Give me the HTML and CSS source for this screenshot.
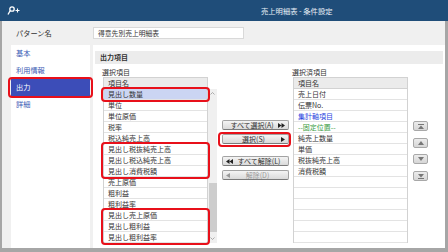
FILE: index.html
```html
<!DOCTYPE html>
<html lang="ja">
<head>
    <meta charset="UTF-8">
    <title>売上明細表 - 条件設定</title>
    <link rel="stylesheet" href="styles.css">
</head>
<body>
    <div class="window">
        <header class="titlebar">
            <svg class="app-icon" width="13" height="9" viewBox="0 0 13 9">
                <circle cx="5" cy="3" r="2.2" fill="none" stroke="#fff" stroke-width="1.3"/>
                <line x1="3.2" y1="4.6" x2="1" y2="8.5" stroke="#fff" stroke-width="1.3"/>
                <path d="M8.5 4.5h4M10.5 2.5v4" stroke="#fff" stroke-width="1.1"/>
            </svg>
            <span class="title">売上明細表 - 条件設定</span>
        </header>

        <div class="content">
            <div class="pattern-row">
                <span class="pattern-label">パターン名</span>
                <div class="text-input">得意先別売上明細表</div>
            </div>

            <div class="panes">
                <nav class="nav">
                    <div class="nav-item">基本</div>
                    <div class="nav-item">利用情報</div>
                    <div class="nav-item active mark">出力</div>
                    <div class="nav-item">詳細</div>
                </nav>

                <section class="main">
                    <h2 class="band">出力項目</h2>
                    <div class="picker">
                        <!-- 選択項目 -->
                        <div class="col col-src">
                            <div class="caption">選択項目</div>
                            <div class="list-wrap">
                                <div class="table">
                                    <div class="th">項目名</div>
                                    <div class="mark">
                                        <div class="td selected">見出し数量</div>
                                    </div>
                                    <div class="td">単位</div>
                                    <div class="td">単位原価</div>
                                    <div class="td">税率</div>
                                    <div class="td">税込純売上高</div>
                                    <div class="mark">
                                        <div class="td">見出し税抜純売上高</div>
                                        <div class="td">見出し税込純売上高</div>
                                        <div class="td">見出し消費税額</div>
                                    </div>
                                    <div class="td">売上原価</div>
                                    <div class="td">粗利益</div>
                                    <div class="td">粗利益率</div>
                                    <div class="mark">
                                        <div class="td">見出し売上原価</div>
                                        <div class="td">見出し粗利益</div>
                                        <div class="td">見出し粗利益率</div>
                                    </div>
                                </div>
                                <div class="scrollbar">
                                    <div class="sb-btn">
                                        <svg width="5" height="3" viewBox="0 0 5 3"><polyline points="0.5,2.5 2.5,0.5 4.5,2.5" fill="none" stroke="#999" stroke-width="0.8"/></svg>
                                    </div>
                                    <div class="sb-track"><div class="sb-thumb"></div></div>
                                    <div class="sb-btn">
                                        <svg width="5" height="3" viewBox="0 0 5 3"><polyline points="0.5,0.5 2.5,2.5 4.5,0.5" fill="none" stroke="#999" stroke-width="0.8"/></svg>
                                    </div>
                                </div>
                            </div>
                        </div>

                        <!-- 移動ボタン -->
                        <div class="moves">
                            <button class="btn">
                                <span class="btn-text">すべて選択(A)</span>
                                <svg width="7" height="5" viewBox="0 0 7 5"><path d="M0 0l3.5 2.5L0 5zM3.5 0L7 2.5 3.5 5z" fill="#222"/></svg>
                            </button>
                            <button class="btn mark">
                                <span class="btn-text">選択(S)</span>
                                <svg width="4" height="5" viewBox="0 0 4 5"><path d="M0 0l4 2.5L0 5z" fill="#222"/></svg>
                            </button>
                            <button class="btn gap-top">
                                <svg width="7" height="5" viewBox="0 0 7 5"><path d="M3.5 0L0 2.5 3.5 5zM7 0L3.5 2.5 7 5z" fill="#222"/></svg>
                                <span class="btn-text">すべて解除(L)</span>
                            </button>
                            <button class="btn disabled">
                                <svg width="4" height="5" viewBox="0 0 4 5"><path d="M4 0L0 2.5 4 5z" fill="#999"/></svg>
                                <span class="btn-text">解除(D)</span>
                            </button>
                        </div>

                        <!-- 選択済項目 -->
                        <div class="col col-dst">
                            <div class="caption">選択済項目</div>
                            <div class="table">
                                <div class="th">項目名</div>
                                <div class="td">売上日付</div>
                                <div class="td">伝票No.</div>
                                <div class="td axis">集計軸項目</div>
                                <div class="td fixed">--固定位置--</div>
                                <div class="td">純売上数量</div>
                                <div class="td">単価</div>
                                <div class="td">税抜純売上高</div>
                                <div class="td">消費税額</div>
                                <div class="td"></div>
                                <div class="td"></div>
                                <div class="td"></div>
                                <div class="td"></div>
                                <div class="td"></div>
                                <div class="td"></div>
                            </div>
                        </div>

                        <!-- 並び替え -->
                        <div class="order">
                            <button class="order-btn">
                                <svg width="6" height="5" viewBox="0 0 6 5"><path d="M0 0.5h6" stroke="#777" stroke-width="1"/><path d="M3 1.5L6 5H0z" fill="#777"/></svg>
                            </button>
                            <button class="order-btn">
                                <svg width="6" height="4" viewBox="0 0 6 4"><path d="M3 0L6 4H0z" fill="#777"/></svg>
                            </button>
                            <button class="order-btn">
                                <svg width="6" height="4" viewBox="0 0 6 4"><path d="M0 0h6L3 4z" fill="#777"/></svg>
                            </button>
                            <button class="order-btn">
                                <svg width="6" height="5" viewBox="0 0 6 5"><path d="M0 0h6L3 3.5z" fill="#777"/><path d="M0 4.5h6" stroke="#777" stroke-width="1"/></svg>
                            </button>
                        </div>
                    </div>
                </section>
            </div>
        </div>
    </div>
</body>
</html>
```

FILE: styles.css
```css
/* Basic Reset */
* {
    margin: 0;
    padding: 0;
    box-sizing: border-box;
}

body {
    width: 448px;
    height: 252px;
    overflow: hidden;
    font-family: "Noto Sans CJK JP", "Noto Sans", sans-serif;
    font-size: 7px;
    color: #333;
    background-color: #fff;
}

.window {
    height: 252px;
    display: flex;
    flex-direction: column;
}

/* Title bar */
.titlebar {
    height: 21px;
    flex-shrink: 0;
    display: flex;
    align-items: center;
    padding-left: 7px;
    background-color: #1f4d79;
    color: #e9eff6;
}

.app-icon {
    display: block;
}

.title {
    margin-left: 241px;
    font-size: 7.3px;
}

/* Window body */
.content {
    flex: 1;
    display: flex;
    flex-direction: column;
    background-color: #f0f0f0;
    border: solid #a6a6a6;
    border-width: 0 3px 4px 2px;
}

.pattern-row {
    height: 24px;
    flex-shrink: 0;
    display: flex;
    align-items: center;
    padding-left: 14px;
    padding-bottom: 1px;
}

.pattern-label {
    width: 77px;
    font-size: 7.2px;
}

.text-input {
    width: 151px;
    height: 12px;
    line-height: 11px;
    padding-left: 4px;
    background-color: #fff;
    border: 1px solid #d9d9d9;
    font-size: 6.8px;
}

.panes {
    flex: 1;
    display: flex;
    gap: 3px;
    padding-left: 9px;
}

/* Left navigation */
.nav {
    width: 79px;
    background-color: #fff;
}

.nav-item {
    height: 17px;
    line-height: 17px;
    padding-left: 5px;
    color: #3a5bb5;
    font-size: 7.2px;
}

.nav-item.active {
    background-color: #3c4db8;
    color: #fff;
}

/* Red highlight frame */
.mark {
    position: relative;
}

.mark::after {
    content: "";
    position: absolute;
    top: -2px;
    right: -3px;
    bottom: -2px;
    left: -3px;
    border: 2.5px solid #e8101a;
    border-radius: 4px;
    z-index: 2;
    pointer-events: none;
}

/* Main panel */
.main {
    flex: 1;
    background-color: #fff;
    padding: 6px 2px 0;
}

.band {
    height: 13px;
    line-height: 13px;
    padding-left: 5px;
    background-color: #ececec;
    font-size: 7px;
    font-weight: bold;
    color: #333;
}

.picker {
    display: flex;
    align-items: flex-start;
    padding-left: 8px;
    margin-top: 3px;
}

.caption {
    height: 10px;
    line-height: 10px;
    margin-left: -1px;
}

.col-src {
    width: 114px;
}

.col-dst {
    width: 115px;
    margin-left: 4px;
}

.list-wrap {
    display: flex;
}

.table {
    flex: 1;
    border: 1px solid #d2d2d2;
    border-bottom: none;
}

.th,
.td {
    height: 11px;
    line-height: 10px;
    padding-left: 4px;
    border-bottom: 1px solid #e3e3e3;
    white-space: nowrap;
}

.th {
    background-color: #ebebeb;
    border-bottom-color: #d2d2d2;
}

.td.selected {
    background-color: #cbd5f3;
}

.td.axis {
    color: #2a46e0;
}

.td.fixed {
    color: #3a9c3f;
}

/* Scrollbar */
.scrollbar {
    width: 9px;
    height: 154px;
    margin-top: 12px;
    display: flex;
    flex-direction: column;
    background-color: #f0f0f0;
}

.sb-btn {
    height: 9px;
    display: flex;
    align-items: center;
    justify-content: center;
}

.sb-track {
    flex: 1;
    display: flex;
    flex-direction: column;
    justify-content: flex-end;
    padding: 0 0.5px 2px;
}

.sb-thumb {
    height: 49px;
    background-color: #cdcdcd;
}

/* Move buttons */
.moves {
    width: 67px;
    margin-left: 5px;
    padding-top: 53px;
    display: flex;
    flex-direction: column;
    gap: 4px;
}

.btn {
    height: 10px;
    display: flex;
    align-items: center;
    padding: 0 3px;
    font-family: inherit;
    font-size: 7px;
    color: #333;
    background: linear-gradient(#f4f4f4, #dadada);
    border: 1px solid #a3a3a3;
    border-bottom-color: #7a7a7a;
    border-radius: 2px;
}

.btn svg {
    flex-shrink: 0;
}

.btn-text {
    flex: 1;
    text-align: center;
    line-height: 8px;
}

.btn.gap-top {
    margin-top: 8px;
}

.btn.mark::after {
    top: -3px;
    right: -3px;
    bottom: -4px;
    left: -5px;
}

.btn.disabled {
    color: #9a9a9a;
}

/* Order buttons */
.order {
    width: 15px;
    margin-left: 5px;
    padding-top: 54px;
    display: flex;
    flex-direction: column;
    gap: 6.7px;
}

.order-btn {
    height: 10px;
    display: flex;
    align-items: center;
    justify-content: center;
    background: linear-gradient(#ececec, #d6d6d6);
    border: 1px solid #a8a8a8;
    border-radius: 2px;
}
```
